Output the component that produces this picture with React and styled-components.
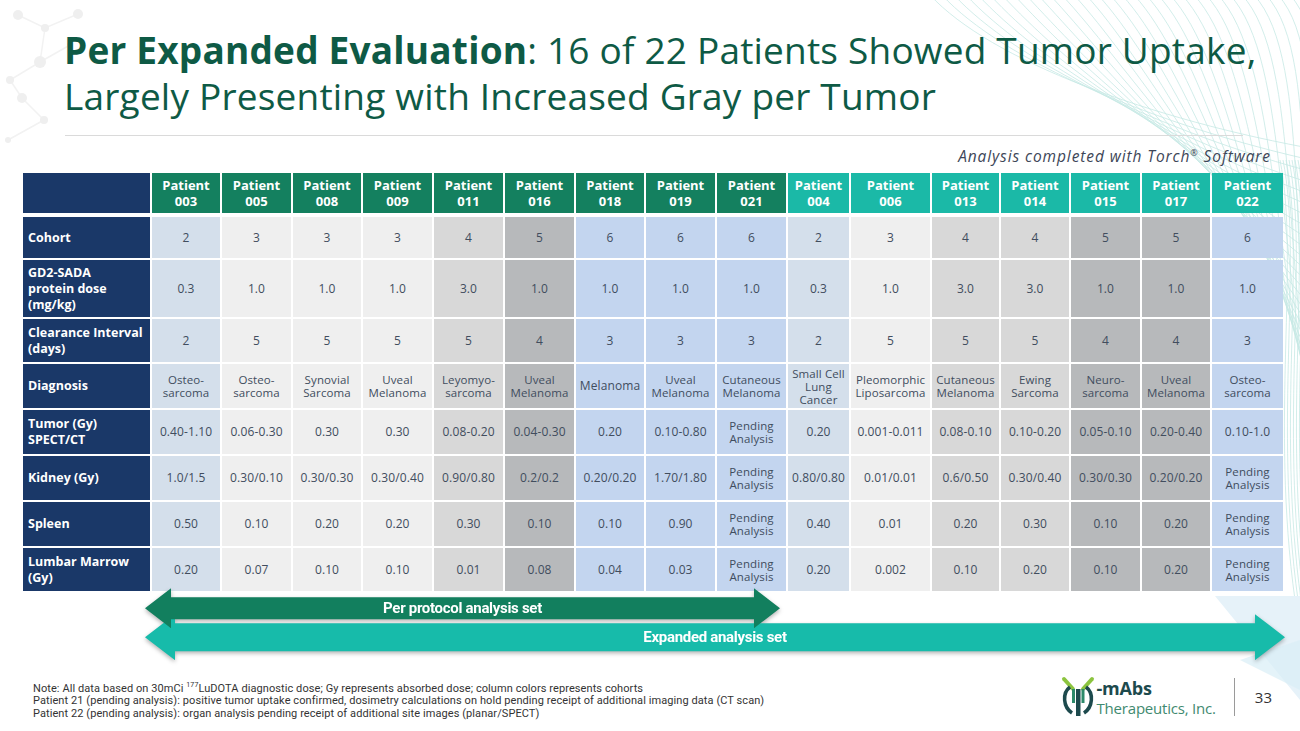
import React from "react";
import styled, { createGlobalStyle } from "styled-components";

// ---------------- GLOBAL ----------------

const GlobalStyle = createGlobalStyle`
  html, body {
    margin: 0;
    padding: 0;
    background: #ffffff;
  }
`;

// ---------------- DATA ----------------

const cohortColors = {
  2: "#d4dfeb",
  3: "#efefef",
  4: "#d8d8d8",
  5: "#b7b9bb",
  6: "#c3d5ef",
};

const colWidths = [68, 69, 68, 69, 69, 69, 68, 69, 69, 61, 79, 67, 68, 69, 68, 71];

const P = "Pending|Analysis";

const patients = [
  { id: "003", group: "pp", cohort: 2, values: ["2", "0.3", "2", "Osteo-|sarcoma", "0.40-1.10", "1.0/1.5", "0.50", "0.20"] },
  { id: "005", group: "pp", cohort: 3, values: ["3", "1.0", "5", "Osteo-|sarcoma", "0.06-0.30", "0.30/0.10", "0.10", "0.07"] },
  { id: "008", group: "pp", cohort: 3, values: ["3", "1.0", "5", "Synovial|Sarcoma", "0.30", "0.30/0.30", "0.20", "0.10"] },
  { id: "009", group: "pp", cohort: 3, values: ["3", "1.0", "5", "Uveal|Melanoma", "0.30", "0.30/0.40", "0.20", "0.10"] },
  { id: "011", group: "pp", cohort: 4, values: ["4", "3.0", "5", "Leyomyo-|sarcoma", "0.08-0.20", "0.90/0.80", "0.30", "0.01"] },
  { id: "016", group: "pp", cohort: 5, values: ["5", "1.0", "4", "Uveal|Melanoma", "0.04-0.30", "0.2/0.2", "0.10", "0.08"] },
  { id: "018", group: "pp", cohort: 6, values: ["6", "1.0", "3", "Melanoma", "0.20", "0.20/0.20", "0.10", "0.04"] },
  { id: "019", group: "pp", cohort: 6, values: ["6", "1.0", "3", "Uveal|Melanoma", "0.10-0.80", "1.70/1.80", "0.90", "0.03"] },
  { id: "021", group: "pp", cohort: 6, values: ["6", "1.0", "3", "Cutaneous|Melanoma", P, P, P, P] },
  { id: "004", group: "ex", cohort: 2, values: ["2", "0.3", "2", "Small Cell|Lung|Cancer", "0.20", "0.80/0.80", "0.40", "0.20"] },
  { id: "006", group: "ex", cohort: 3, values: ["3", "1.0", "5", "Pleomorphic|Liposarcoma", "0.001-0.011", "0.01/0.01", "0.01", "0.002"] },
  { id: "013", group: "ex", cohort: 4, values: ["4", "3.0", "5", "Cutaneous|Melanoma", "0.08-0.10", "0.6/0.50", "0.20", "0.10"] },
  { id: "014", group: "ex", cohort: 4, values: ["4", "3.0", "5", "Ewing|Sarcoma", "0.10-0.20", "0.30/0.40", "0.30", "0.20"] },
  { id: "015", group: "ex", cohort: 5, values: ["5", "1.0", "4", "Neuro-|sarcoma", "0.05-0.10", "0.30/0.30", "0.10", "0.10"] },
  { id: "017", group: "ex", cohort: 5, values: ["5", "1.0", "4", "Uveal|Melanoma", "0.20-0.40", "0.20/0.20", "0.20", "0.20"] },
  { id: "022", group: "ex", cohort: 6, values: ["6", "1.0", "3", "Osteo-|sarcoma", "0.10-1.0", P, P, P] },
];

const rows = [
  { label: "Cohort", height: 41 },
  { label: "GD2-SADA|protein dose|(mg/kg)", height: 57 },
  { label: "Clearance Interval|(days)", height: 43 },
  { label: "Diagnosis", height: 44 },
  { label: "Tumor (Gy)|SPECT/CT", height: 44 },
  { label: "Kidney (Gy)", height: 44 },
  { label: "Spleen", height: 44 },
  { label: "Lumbar Marrow|(Gy)", height: 43 },
];

const lines = (text) =>
  text.split("|").map((t, i) => <span key={i}>{t}</span>);

// ---------------- STYLED COMPONENTS ----------------

const Page = styled.div`
  position: relative;
  width: 1300px;
  height: 731px;
  overflow: hidden;
  background: #ffffff;
  font-family: "Open Sans", "DejaVu Sans", sans-serif;
`;

const Decor = styled.svg`
  position: absolute;
  left: 0;
  top: 0;
  pointer-events: none;
`;

const Content = styled.div`
  position: relative;
  display: flex;
  flex-direction: column;
`;

const Title = styled.h1`
  margin: 0;
  padding: 27px 0 0 64px;
  font-size: 37px;
  line-height: 46px;
  font-weight: 400;
  color: #0e5a45;
  letter-spacing: 0.2px;

  strong {
    font-weight: 700;
  }
`;

const Rule = styled.div`
  height: 1px;
  margin: 16px 57px 0 65px;
  background: #dadada;
`;

const Source = styled.div`
  margin-top: 8px;
  padding-right: 29px;
  text-align: right;
  font-size: 15.5px;
  font-style: italic;
  color: #3d4657;
  line-height: 18px;
  letter-spacing: 0.9px;

  sup {
    font-size: 9px;
  }
`;

const TableWrap = styled.div`
  margin: 8px 0 0 23px;
  display: flex;
  flex-direction: column;
  gap: 4px;
`;

const Grid = styled.div`
  display: grid;
  grid-template-columns: 127px ${colWidths.map((w) => `${w}px`).join(" ")};
  grid-template-rows: ${(p) => p.$rows};
  gap: 2px;
`;

const Corner = styled.div`
  background: #1a3868;
`;

const HeadCell = styled.div`
  background: ${(p) => (p.$group === "pp" ? "#14805f" : "#1bb9a7")};
  color: #ffffff;
  font-weight: 700;
  font-size: 13px;
  line-height: 16px;
  display: flex;
  flex-direction: column;
  align-items: center;
  justify-content: center;
`;

const RowLabel = styled.div`
  background: #1a3868;
  color: #ffffff;
  font-weight: 700;
  font-size: 12.5px;
  line-height: 16px;
  padding-left: 5px;
  display: flex;
  flex-direction: column;
  justify-content: center;
  white-space: nowrap;
`;

const Cell = styled.div`
  background: ${(p) => cohortColors[p.$cohort]};
  color: #414d5e;
  font-size: ${(p) => (p.$small ? "11.5px" : "12px")};
  line-height: ${(p) => (p.$small ? "13px" : "14px")};
  text-align: center;
  display: flex;
  flex-direction: column;
  align-items: center;
  justify-content: center;
  white-space: nowrap;
  letter-spacing: 0.1px;
`;

const ArrowArea = styled.div`
  margin: -3px 0 0 145px;
  display: flex;
  flex-direction: column;
  filter: drop-shadow(0 2px 2px rgba(0, 0, 0, 0.3));
`;

const Arrow = styled.div`
  position: relative;
  z-index: ${(p) => p.$z};
  width: ${(p) => p.$width}px;
  height: ${(p) => p.$height}px;
  margin-top: ${(p) => p.$offset || 0}px;
  background: ${(p) => p.$color};
  clip-path: polygon(
    0 50%,
    ${(p) => p.$head}px 0,
    ${(p) => p.$head}px ${(p) => p.$inset}px,
    calc(100% - ${(p) => p.$head}px) ${(p) => p.$inset}px,
    calc(100% - ${(p) => p.$head}px) 0,
    100% 50%,
    calc(100% - ${(p) => p.$head}px) 100%,
    calc(100% - ${(p) => p.$head}px) calc(100% - ${(p) => p.$inset}px),
    ${(p) => p.$head}px calc(100% - ${(p) => p.$inset}px),
    ${(p) => p.$head}px 100%
  );
  display: flex;
  align-items: center;
  justify-content: center;
  color: #ffffff;
  font-family: Roboto, "Open Sans", sans-serif;
  font-weight: 700;
  font-size: 15px;
  letter-spacing: -0.3px;
`;

const Footer = styled.div`
  margin-top: 16px;
  display: flex;
  align-items: flex-end;
  justify-content: space-between;
  padding: 0 28px 0 33px;
`;

const Notes = styled.div`
  font-family: Roboto, "Open Sans", sans-serif;
  font-size: 11px;
  line-height: 13px;
  color: #333333;
  letter-spacing: 0.08px;
  padding-bottom: 4px;

  sup {
    font-size: 7px;
  }
`;

const Brand = styled.div`
  display: flex;
  align-items: center;
  margin-bottom: 6px;
`;

const Logo = styled.div`
  display: flex;
  align-items: center;
  gap: 1px;
`;

const LogoText = styled.div`
  display: flex;
  flex-direction: column;
  gap: 1px;
`;

const LogoName = styled.span`
  display: block;
  font-weight: 700;
  font-size: 18px;
  line-height: 20px;
  color: #1d4a4d;
  letter-spacing: -0.2px;
`;

const LogoSub = styled.span`
  display: block;
  font-size: 15px;
  line-height: 18px;
  color: #3f8a70;
  letter-spacing: -0.2px;
`;

const Divider = styled.div`
  width: 1px;
  height: 38px;
  background: #9a9a9a;
  margin: 0 20px 0 18px;
`;

const PageNum = styled.div`
  font-size: 15px;
  color: #333333;
`;

// ---------------- DECORATION ----------------

const waves = Array.from({ length: 34 }, (_, i) => {
  const x0 = 930 + i * 12;
  return `M ${x0} -5 C ${x0 + 60} 60, ${1150 + i * 5} ${120 + i * 6}, 1320 ${150 + i * 12}`;
});

const sideWaves = Array.from({ length: 10 }, (_, i) => {
  const x = 1280 + i * 3;
  return `M ${x} 160 C ${x + 20} 260, ${x - 10} 420, ${x + 15} 600`;
});

const dots = [
  [18, 15, 5], [45, 28, 4], [78, 14, 5], [40, 62, 6], [10, 80, 4], [22, 98, 5],
  [44, 120, 4], [8, 140, 3], [70, 45, 3],
];

const Background = () => (
  <Decor width="1300" height="731" viewBox="0 0 1300 731">
    <g stroke="#f2f2f2" strokeWidth="1.5" fill="none">
      <path d="M18 15 L45 28 L78 14 M45 28 L40 62 L10 80 L22 98 L44 120 L8 140 M40 62 L70 45" />
    </g>
    {dots.map(([x, y, r], i) => (
      <circle key={i} cx={x} cy={y} r={r} fill="#efefef" />
    ))}
    <g stroke="#b9e3de" strokeWidth="0.8" fill="none" opacity="0.8">
      {waves.map((d, i) => (
        <path key={i} d={d} />
      ))}
      {sideWaves.map((d, i) => (
        <path key={i} d={d} />
      ))}
    </g>
    <polygon points="1215,596 1300,596 1300,700" fill="#e6f2f9" />
    <polygon points="1240,660 1300,640 1300,690" fill="#d9eef7" opacity="0.7" />
  </Decor>
);

const AntibodyMark = () => (
  <svg width="36" height="42" viewBox="0 0 36 42">
    <path d="M4 3 L13 13" stroke="#8cc43f" strokeWidth="4" strokeLinecap="round" />
    <path d="M32 3 L23 13" stroke="#8cc43f" strokeWidth="4" strokeLinecap="round" />
    <path d="M10 11 C2 17, 3 31, 12 37" stroke="#1d4a4d" strokeWidth="3.5" fill="none" />
    <path d="M26 11 C34 17, 33 31, 24 37" stroke="#1d4a4d" strokeWidth="3.5" fill="none" />
    <rect x="16" y="13" width="4.5" height="27" fill="#1d4a4d" />
    <rect x="12" y="13" width="3" height="14" fill="#2c8a6a" />
    <rect x="21.5" y="13" width="3" height="14" fill="#2c8a6a" />
  </svg>
);

// ---------------- APP ----------------

const App = () => {
  return (
    <Page>
      <GlobalStyle />
      <Background />
      <Content>
        <Title>
          <strong>Per Expanded Evaluation</strong>: 16 of 22 Patients Showed Tumor Uptake,
          <br />
          Largely Presenting with Increased Gray per Tumor
        </Title>
        <Rule />
        <Source>
          Analysis completed with Torch<sup>®</sup> Software
        </Source>

        <TableWrap>
          <Grid $rows="40px">
            <Corner />
            {patients.map((p) => (
              <HeadCell key={p.id} $group={p.group}>
                <span>Patient</span>
                <span>{p.id}</span>
              </HeadCell>
            ))}
          </Grid>
          <Grid $rows={rows.map((r) => `${r.height}px`).join(" ")}>
            {rows.map((r, ri) => (
              <React.Fragment key={r.label}>
                <RowLabel>{lines(r.label)}</RowLabel>
                {patients.map((p) => (
                  <Cell
                    key={p.id}
                    $cohort={p.cohort}
                    $small={p.values[ri] === P || p.values[ri].includes("|")}
                  >
                    {lines(p.values[ri])}
                  </Cell>
                ))}
              </React.Fragment>
            ))}
          </Grid>
        </TableWrap>

        <ArrowArea>
          <Arrow $z={2} $width={635} $height={40} $head={26} $inset={9} $color="#127f5e">
            Per protocol analysis set
          </Arrow>
          <Arrow $z={1} $width={1140} $height={46} $head={30} $inset={9} $offset={-14} $color="#17bbaa">
            Expanded analysis set
          </Arrow>
        </ArrowArea>

        <Footer>
          <Notes>
            Note: All data based on 30mCi <sup>177</sup>LuDOTA diagnostic dose; Gy represents absorbed dose; column colors represents cohorts
            <br />
            Patient 21 (pending analysis): positive tumor uptake confirmed, dosimetry calculations on hold pending receipt of additional imaging data (CT scan)
            <br />
            Patient 22 (pending analysis): organ analysis pending receipt of additional site images (planar/SPECT)
          </Notes>
          <Brand>
            <Logo>
              <AntibodyMark />
              <LogoText>
                <LogoName>-mAbs</LogoName>
                <LogoSub>Therapeutics, Inc.</LogoSub>
              </LogoText>
            </Logo>
            <Divider />
            <PageNum>33</PageNum>
          </Brand>
        </Footer>
      </Content>
    </Page>
  );
};

export default App;
